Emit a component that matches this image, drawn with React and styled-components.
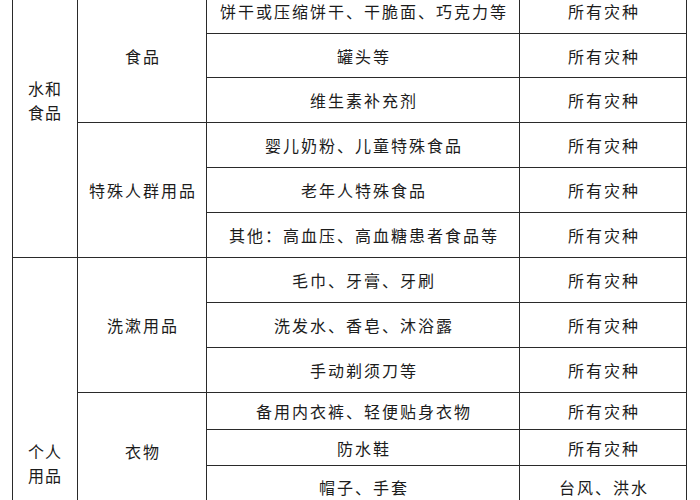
import React from "react";
import styled, { createGlobalStyle } from "styled-components";

const GlobalStyle = createGlobalStyle`
  html, body {
    margin: 0;
    padding: 0;
    background: #fff;
  }
  body {
    font-family: "Noto Sans CJK SC", "Noto Sans", sans-serif;
    color: #1c1c1c;
    overflow: hidden;
  }
`;

const columns = [65, 129, 313, 167];

// rows of the supply list; group/category cells carry their rowspan
const rows = [
  { group: { text: ["水和", "食品"], span: 6, pad: "0 0 46px" }, cat: { text: "食品", span: 3 }, item: "饼干或压缩饼干、干脆面、巧克力等", h: 45, scope: "所有灾种" },
  { item: "罐头等", h: 44, scope: "所有灾种" },
  { item: "维生素补充剂", h: 45, scope: "所有灾种" },
  { cat: { text: "特殊人群用品", span: 3 }, item: "婴儿奶粉、儿童特殊食品", h: 45, scope: "所有灾种" },
  { item: "老年人特殊食品", h: 45, scope: "所有灾种" },
  { item: "其他：高血压、高血糖患者食品等", h: 45, scope: "所有灾种" },
  { group: { text: ["个人", "用品"], span: 6, pad: "160px 0 0" }, cat: { text: "洗漱用品", span: 3 }, item: "毛巾、牙膏、牙刷", h: 45, scope: "所有灾种" },
  { item: "洗发水、香皂、沐浴露", h: 45, scope: "所有灾种" },
  { item: "手动剃须刀等", h: 45, scope: "所有灾种" },
  { cat: { text: "衣物", span: 3 }, item: "备用内衣裤、轻便贴身衣物", h: 37, scope: "所有灾种" },
  { item: "防水鞋", h: 36, scope: "所有灾种" },
  { item: "帽子、手套", h: 43, scope: "台风、洪水" },
];

const App = () => (
  <>
    <GlobalStyle />
    <Page>
      <Table>
        <colgroup>
          {columns.map((w, i) => (
            <Col key={i} $w={w} />
          ))}
        </colgroup>
        <tbody>
          {rows.map((r, i) => (
            <Row key={i} $h={r.h}>
              {r.group && (
                <GroupCell rowSpan={r.group.span} $pad={r.group.pad}>
                  {r.group.text.map((t) => (
                    <div key={t}>{t}</div>
                  ))}
                </GroupCell>
              )}
              {r.cat && <Cell rowSpan={r.cat.span}>{r.cat.text}</Cell>}
              <Cell>{r.item}</Cell>
              <Cell>{r.scope}</Cell>
            </Row>
          ))}
        </tbody>
      </Table>
    </Page>
  </>
);

const Page = styled.div`
  padding-left: 12px;
  height: 500px;
  overflow: hidden;
`;

const Table = styled.table`
  margin-top: -12px;
  width: 675px;
  border-collapse: collapse;
  table-layout: fixed;
  font-size: 16px;
  letter-spacing: 2px;
`;

const Col = styled.col`
  width: ${(p) => p.$w}px;
`;

const Row = styled.tr`
  height: ${(p) => p.$h}px;
`;

const Cell = styled.td`
  border: 1px solid #2a2a2a;
  padding: 0 0 0 2px;
  text-align: center;
  vertical-align: middle;
  line-height: 22px;
  white-space: nowrap;
`;

const GroupCell = styled(Cell)`
  padding: ${(p) => p.$pad};
  line-height: 24px;
  letter-spacing: 1px;
`;

export default App;
